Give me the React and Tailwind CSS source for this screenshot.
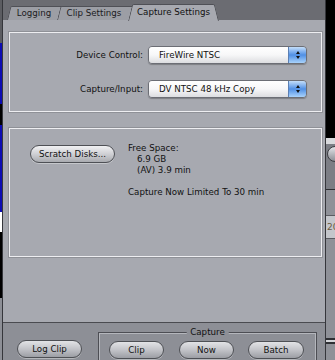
import React from 'react';

const Tab = ({ label, active = false, className = '' }) => {
  if (active) {
    return (
      <div className={`relative h-[16px] flex items-center justify-center ${className}`}>
        <div className="absolute left-0 top-0 bottom-[-1px] w-[60%] skew-x-[-14deg] origin-bottom bg-[#a7a9b0] border-l border-t border-[#4f5056] rounded-tl-[2px]" />
        <div className="absolute right-0 top-0 bottom-[-1px] w-[60%] skew-x-[14deg] origin-bottom bg-[#a7a9b0] border-r border-t border-[#4f5056] rounded-tr-[2px]" />
        <span className="relative pt-[1px]">{label}</span>
      </div>
    );
  }
  return (
    <div className={`relative h-[14px] flex items-center justify-center ${className}`}>
      <div className="absolute inset-0 skew-x-[-14deg] origin-bottom bg-[#9c9ea5] border-l border-t border-r border-[#4f5056] rounded-t-[2px]" />
      <span className="relative pt-[1px] text-[#1b1b1e]">{label}</span>
    </div>
  );
};

const Popup = ({ value }) => (
  <div className="flex h-[18px] w-[159px] rounded-[4px] border border-[#6c6e75] shadow-[0_1px_1px_rgba(0,0,0,0.25)] overflow-hidden">
    <div className="flex-1 flex items-center pl-[10px] bg-gradient-to-b from-white via-[#f7f7f8] to-[#dcdde0]">
      {value}
    </div>
    <div className="w-[18px] flex flex-col items-center justify-center gap-[2px] border-l border-[#5b7fb3] bg-gradient-to-b from-[#c4def9] via-[#4f8fe4] to-[#a9d3fb]">
      <div className="w-0 h-0 border-l-[2.5px] border-r-[2.5px] border-b-[3px] border-l-transparent border-r-transparent border-b-[#111]" />
      <div className="w-0 h-0 border-l-[2.5px] border-r-[2.5px] border-t-[3px] border-l-transparent border-r-transparent border-t-[#111]" />
    </div>
  </div>
);

const Pill = ({ label, className = '', dark = false }) => (
  <div
    className={`flex items-center justify-center h-[18px] rounded-full border border-[#4e5055] shadow-[0_1px_0_rgba(255,255,255,0.35)] bg-gradient-to-b ${
      dark ? 'from-[#e2e3e6] via-[#c2c3c8] to-[#9c9ea4]' : 'from-[#f1f1f3] via-[#cfd0d4] to-[#a9abb0]'
    } ${className}`}
  >
    {label}
  </div>
);

const GroupBox = ({ className = '', children }) => (
  <div className={`border border-[#eeeef1] shadow-[0_0_0_1px_#8f9197] ${className}`}>{children}</div>
);

export default function App() {
  return (
    <div className="flex w-[335px] h-[360px] overflow-hidden bg-black font-['DejaVu_Sans',sans-serif] text-[8.7px] leading-[11px] text-[#111]">
      {/* window behind, left */}
      <div className="w-[2px] shrink-0 flex flex-col">
        <div className="h-[43px] bg-[#5b5c61]" />
        <div className="h-[61px] bg-[#0c0cb2]" />
        <div className="h-[21px] bg-black" />
        <div className="h-[87px] bg-[#0c0cb2]" />
        <div className="h-[20px] bg-white" />
        <div className="h-[66px] bg-black" />
        <div className="flex-1 bg-[#8d8f96]" />
      </div>

      {/* main window */}
      <div className="w-[324px] shrink-0 flex flex-col border-l border-r border-[#35363b]">
        <div className="h-[20px] bg-[#6b6c72] flex items-end pl-[4px]">
          <Tab label="Logging" className="w-[54px]" />
          <Tab label="Clip Settings" className="w-[74px] -ml-[4px]" />
          <Tab label="Capture Settings" active className="w-[91px] -ml-[3px]" />
        </div>

        <div className="flex-1 bg-[#a7a9b0] pt-[12px] pl-[6px] pr-[3px]">
          <GroupBox className="h-[80px] pt-[13px] flex flex-col gap-[16px]">
            <div className="flex items-center">
              <div className="w-[138px] text-right pr-[5px]">Device Control:</div>
              <Popup value="FireWire NTSC" />
            </div>
            <div className="flex items-center">
              <div className="w-[138px] text-right pr-[5px]">Capture/Input:</div>
              <Popup value="DV NTSC 48 kHz Copy" />
            </div>
          </GroupBox>

          <GroupBox className="h-[129px] mt-[16px] pt-[16px] pl-[20px] flex">
            <Pill label="Scratch Disks..." className="w-[85px] h-[17px]" />
            <div className="ml-[13px] -mt-[2px]">
              <div>Free Space:</div>
              <div className="pl-[9px]">6.9 GB</div>
              <div className="pl-[9px]">(AV) 3.9 min</div>
              <div className="mt-[11px]">Capture Now Limited To 30 min</div>
            </div>
          </GroupBox>
        </div>

        <div className="h-[38px] border-t border-[#4a4b50] bg-[#8d8f96] flex pl-[14px]">
          <Pill label="Log Clip" dark className="w-[65px] mt-[17px]" />
          <div className="relative ml-[16px] mt-[9px] w-[219px] h-[40px] border border-[#4d4e54] shadow-[inset_0_0_0_1px_#b4b6bc] pt-[8px] pl-[10px] flex gap-[15px]">
            <div className="absolute -top-[6px] left-1/2 -translate-x-1/2 px-[4px] bg-[#8d8f96]">Capture</div>
            <Pill label="Clip" dark className="w-[55px]" />
            <Pill label="Now" dark className="w-[55px]" />
            <Pill label="Batch" dark className="w-[56px] -ml-[1px]" />
          </div>
        </div>
      </div>

      {/* window behind, right */}
      <div className="flex-1 min-w-0 overflow-hidden flex flex-col">
        <div className="h-[138px] bg-black" />
        <div className="h-[6px] bg-[#d9dadd]" />
        <div className="h-[46px] bg-[#7c7e85] border-b border-[#2f3034] relative overflow-hidden">
          <div className="absolute left-[1px] top-[2px] w-[16px] h-[16px] rounded-full border border-[#3b3c41] bg-gradient-to-b from-[#e3e4e8] to-[#8c8e95]" />
        </div>
        <div className="h-[26px] bg-[#8f9198] border-b border-[#5a5b61]" />
        <div className="h-[22px] bg-[#c4c6cb] text-[9px] text-[#6a5a40] pl-[1px] leading-[22px]">20</div>
        <div className="h-[100px] bg-[#8f9198] border-t border-[#5a5b61]" />
        <div className="h-[2px] bg-[#2f3034]" />
        <div className="h-[2px] bg-[#d5d6da]" />
        <div className="h-[2px] bg-[#2f3034]" />
        <div className="flex-1 bg-[#8f9198]" />
      </div>
    </div>
  );
}
